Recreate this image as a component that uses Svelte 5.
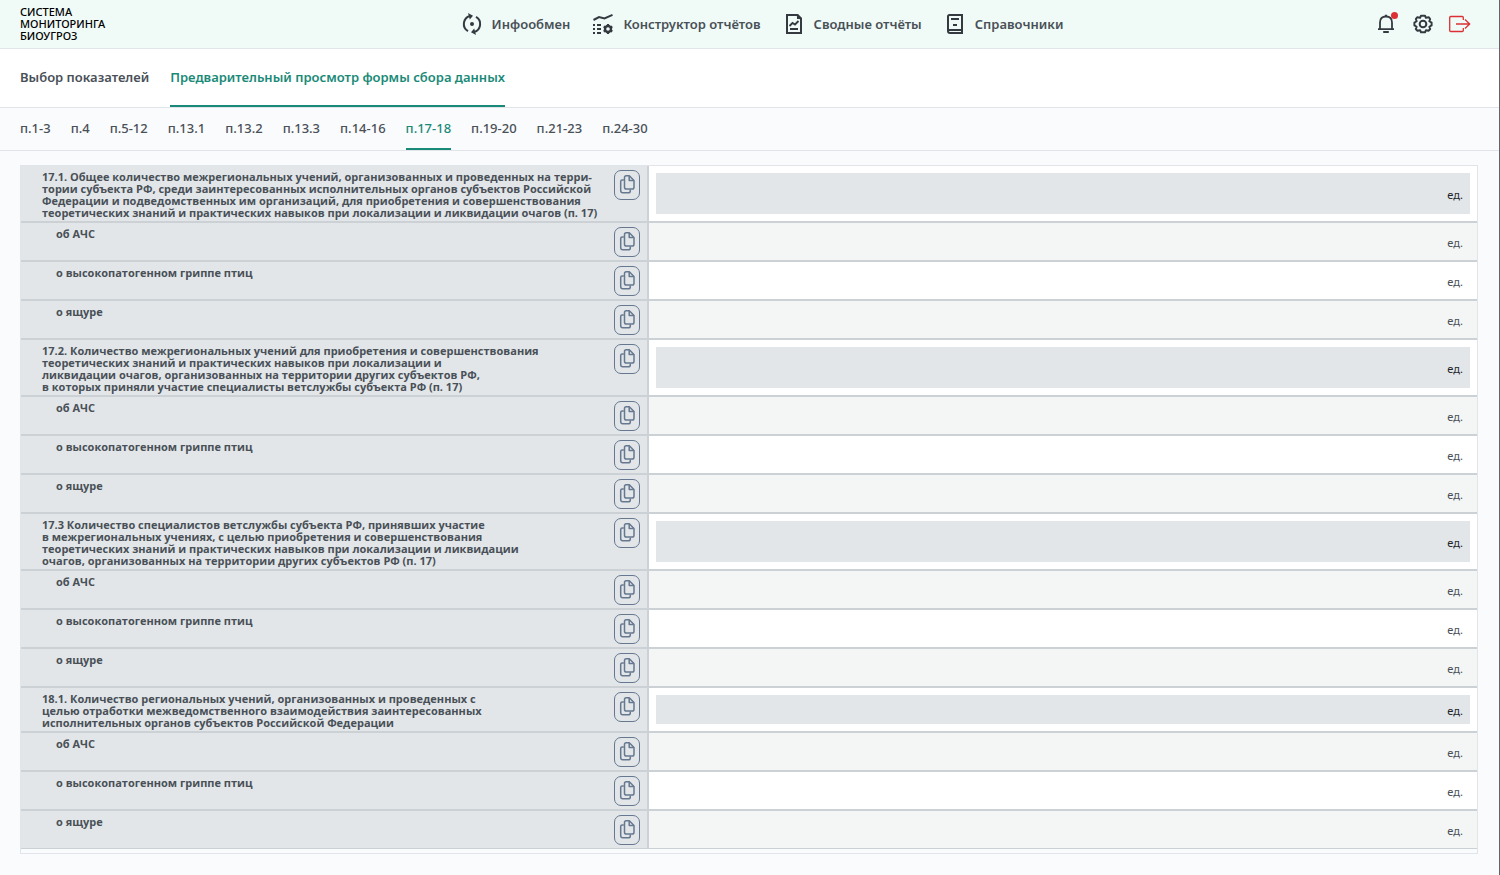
<script>
  const menu = [
    { icon: 'exchange', text: 'Инфообмен' },
    { icon: 'builder', text: 'Конструктор отчётов' },
    { icon: 'report', text: 'Сводные отчёты' },
    { icon: 'book', text: 'Справочники' }
  ];

  const pages = ['Выбор показателей', 'Предварительный просмотр формы сбора данных'];
  const sections = ['п.1-3', 'п.4', 'п.5-12', 'п.13.1', 'п.13.2', 'п.13.3', 'п.14-16', 'п.17-18', 'п.19-20', 'п.21-23', 'п.24-30'];

  let activePage = $state(1);
  let activeSection = $state(7);

  const diseases = ['об АЧС', 'о высокопатогенном гриппе птиц', 'о ящуре'];

  const groups = [
    [
      '17.1. Общее количество межрегиональных учений, организованных и проведенных на терри-',
      'тории субъекта РФ, среди заинтересованных исполнительных органов субъектов Российской',
      'Федерации и подведомственных им организаций, для приобретения и совершенствования',
      'теоретических знаний и практических навыков при локализации и ликвидации очагов (п. 17)'
    ],
    [
      '17.2. Количество межрегиональных учений для приобретения и совершенствования',
      'теоретических знаний и практических навыков при локализации и',
      'ликвидации очагов, организованных на территории других субъектов РФ,',
      'в которых приняли участие специалисты ветслужбы субъекта РФ (п. 17)'
    ],
    [
      '17.3 Количество специалистов ветслужбы субъекта РФ, принявших участие',
      'в межрегиональных учениях, с целью приобретения и совершенствования',
      'теоретических знаний и практических навыков при локализации и ликвидации',
      'очагов, организованных на территории других субъектов РФ (п. 17)'
    ],
    [
      '18.1. Количество региональных учений, организованных и проведенных с',
      'целью отработки межведомственного взаимодействия заинтересованных',
      'исполнительных органов субъектов Российской Федерации'
    ]
  ];

  let values = $state({});
</script>

{#snippet copyButton()}
  <button class="copy" type="button" aria-label="Копировать">
    <svg width="16" height="20" viewBox="0 0 16 20" fill="none" stroke="currentColor" stroke-width="1.5" stroke-linejoin="round">
      <path d="M4.800 5H3.200Q1.700 5 1.700 6.500V15.500Q1.700 17.800 3.700 17.800H9.300Q11.300 17.800 11.300 16V14.500" />
      <path d="M7.200 .8H10.300L15 5.500V12.200Q15 14 13.200 14H7.400Q5.500 14 5.500 12.200V2.600Q5.500 .8 7.200 .8Z" />
      <path d="M10.200 1V5.500H14.800" />
    </svg>
  </button>
{/snippet}

<div class="app">
  <header class="top">
    <a class="logo" href="#home">СИСТЕМА<br />МОНИТОРИНГА<br />БИОУГРОЗ</a>

    <nav class="menu">
      {#each menu as item}
        <a href="#{item.icon}">
          {#if item.icon === 'exchange'}
            <svg height="22" viewBox="0 0 20 22" fill="none" stroke="currentColor" stroke-width="2">
              <path d="M6 18.200A8.300 8.300 0 0 1 8 3M14 3.800A8.300 8.300 0 0 1 12 19" />
              <path d="M6 0L11 2.800L7.800 6.600ZM14 22L9 19.200L12.200 15.400Z" fill="currentColor" stroke="none" />
              <circle cx="10" cy="11" r="2" fill="currentColor" stroke="none" />
            </svg>
          {:else if item.icon === 'builder'}
            <svg height="22" viewBox="0 0 20 22" fill="none" stroke="currentColor" stroke-width="2">
              <path d="M.5 7L6 4L11.500 5.500L19.500 1.800" stroke-width="2" />
              <path d="M0 12H2M4 12H8M0 16H2M4 16H8M0 20H2M4 20H8" />
              <circle cx="15" cy="16" r="3" stroke-width="2.400" />
              <path d="M15 11V13M15 19V21M10.700 13.500L12.400 14.500M17.600 17.500L19.300 18.500M10.700 18.500L12.400 17.500M17.600 14.500L19.300 13.500" stroke-width="2.200" />
            </svg>
          {:else if item.icon === 'report'}
            <svg height="20" viewBox="0 0 16 20" fill="none" stroke="currentColor" stroke-width="2">
              <path d="M1 1H11L15 5V19H1Z" />
              <path d="M11 0V5H16V4L12 0Z" fill="currentColor" stroke="none" />
              <path d="M4 15H12M3.500 12L6.500 9L9 10.500L12.500 7" stroke-width="1.800" />
            </svg>
          {:else}
            <svg height="20" viewBox="0 0 16 20" fill="none" stroke="currentColor" stroke-width="2">
              <path d="M15 16V1H2.500Q1 1 1 2.500V17Q1 19 3 19H16M1 16H16M15 16V19" />
              <path d="M4 5H12M6 11H10" />
            </svg>
          {/if}
          <span>{item.text}</span>
        </a>
      {/each}
    </nav>

    <div class="tools">
      <button class="bell" type="button" aria-label="Уведомления">
        <svg width="22" height="20" viewBox="0 0 22 20" fill="none" stroke="currentColor" stroke-width="1.800">
          <path d="M3 15.200H19M5 15V8.500Q5 2.500 11 2.500Q17 2.500 17 8.500V15M9.800 1.600H12.200" />
          <path d="M8.200 18H13.800" stroke-width="2" />
        </svg>
        <span class="dot"></span>
      </button>
      <button type="button" aria-label="Настройки">
        <svg width="20" height="20" viewBox="0 0 24 24" fill="none" stroke="currentColor" stroke-width="2.400" stroke-linejoin="round">
          <path d="M9.600 2H14.400L15.500 4.600L19 3.900L20.600 6L19.600 8.700L22.300 10.300V13.700L19.600 15.300L20.600 18L18.600 20.200L15.600 19.400L14.400 22H9.600L8.500 19.400L5.400 20.200L3.400 18L4.400 15.300L1.700 13.700V10.300L4.400 8.700L3.400 6L5 3.900L8.500 4.600Z" />
          <circle cx="12" cy="12" r="4" />
        </svg>
      </button>
      <button class="exit" type="button" aria-label="Выход">
        <svg width="22" height="18" viewBox="0 0 22 18" fill="none" stroke="currentColor" stroke-width="1.300">
          <path d="M14.300 5V2.500Q14.300 1.500 13.300 1.500H1.700Q.7 1.500 .7 2.500V15.500Q.7 16.500 1.700 16.500H13.300Q14.300 16.500 14.300 15.500V13" />
          <path d="M7 9H20.500M16 4.500L20.700 9L16 13.500" />
        </svg>
      </button>
    </div>
  </header>

  <nav class="tabs pages">
    {#each pages as page, i}
      <button type="button" class:active={i === activePage} onclick={() => (activePage = i)}>{page}</button>
    {/each}
  </nav>

  <nav class="tabs sections">
    {#each sections as section, i}
      <button type="button" class:active={i === activeSection} onclick={() => (activeSection = i)}>{section}</button>
    {/each}
  </nav>

  <main>
    <div class="frame">
      <table>
        <tbody>
          {#each groups as lines, g}
            <tr class="total">
              <th scope="row">
                <div class="name">
                  <label for="total-{g}">{#each lines as line}{line}<br />{/each}</label>
                  {@render copyButton()}
                </div>
              </th>
              <td>
                <div class="field">
                  <input id="total-{g}" type="text" readonly />
                  <span>ед.</span>
                </div>
              </td>
            </tr>
            {#each diseases as disease, d}
              <tr class="item" class:odd={d % 2 === 0}>
                <th scope="row">
                  <div class="name">
                    <label for="value-{g}-{d}">{disease}</label>
                    {@render copyButton()}
                  </div>
                </th>
                <td>
                  <div class="field">
                    <input id="value-{g}-{d}" type="text" bind:value={values[`${g}-${d}`]} />
                    <span>ед.</span>
                  </div>
                </td>
              </tr>
            {/each}
          {/each}
        </tbody>
      </table>
    </div>
  </main>
</div>

<style>
  :global(body) {
    background: #fafbfd;
  }

  .app {
    min-height: 100vh;
    box-sizing: border-box;
    border-right: 1px solid #60666b;
    background: #fafbfd;
    color: #495057;
    font-family: 'Noto Sans', 'Open Sans', sans-serif;
    font-size: 13px;
    font-weight: 500;
  }

  button {
    padding: 0;
    border: 0;
    background: none;
    color: inherit;
    font: inherit;
    cursor: pointer;
  }

  svg {
    display: block;
    flex: none;
  }

  /* header */
  .top {
    display: grid;
    grid-template-columns: 1fr auto 1fr;
    align-items: center;
    height: 48px;
    padding: 0 28px 0 20px;
    border-bottom: 1px solid #e1e5e9;
    background: #f0fbf8;
  }

  .logo {
    color: #000;
    font-size: 11px;
    font-weight: 500;
    line-height: 12px;
    text-decoration: none;
  }

  .menu {
    display: flex;
    gap: 21px;
    padding-left: 32px;
    font-weight: 600;
  }

  .menu a {
    display: flex;
    align-items: center;
    gap: 8px;
    color: #495057;
    text-decoration: none;
  }

  .menu svg {
    width: 24px;
  }

  .menu svg,
  .tools {
    color: #343a40;
  }

  .tools {
    display: flex;
    align-items: center;
    justify-content: flex-end;
    gap: 16px;
  }

  .bell {
    position: relative;
  }

  .dot {
    position: absolute;
    top: -2px;
    right: -1px;
    width: 7px;
    height: 7px;
    border-radius: 50%;
    background: #dc3035;
  }

  .exit {
    color: #dc3035;
  }

  /* tabs */
  .tabs {
    display: flex;
    gap: 21px;
    padding: 0 20px;
    border-bottom: 1px solid #e1e5e9;
  }

  .tabs button {
    border-bottom: 2px solid transparent;
    white-space: nowrap;
  }

  .tabs .active {
    border-color: #1a8a78;
    color: #1a8a78;
  }

  .pages {
    height: 58px;
    background: #fff;
    font-weight: 600;
  }

  .sections {
    gap: 20px;
    height: 42px;
  }

  /* table */
  main {
    padding: 14px 21px 21px 20px;
  }

  .frame {
    padding-bottom: 4px;
    border: 1px solid #e1e5e9;
  }

  table {
    width: 100%;
    border-collapse: separate;
    border-spacing: 0;
    table-layout: fixed;
    background: #fff;
  }

  th,
  td {
    padding: 0;
    border-bottom: 2px solid #ccd1d6;
    vertical-align: top;
  }

  tr:last-child th,
  tr:last-child td {
    border-bottom-width: 1px;
  }

  th {
    width: 43%;
    border-right: 2px solid #ccd1d6;
    background: #e2e6e9;
    text-align: left;
  }

  .name {
    display: flex;
    align-items: flex-start;
    justify-content: space-between;
    padding: 4px 7px 2px 21px;
  }

  .name label {
    padding-top: 1px;
    font-family: 'Open Sans', 'Noto Sans', sans-serif;
    font-size: 11px;
    font-weight: 700;
    line-height: 12px;
    white-space: nowrap;
  }

  .item .name {
    padding-left: 35px;
  }

  .copy {
    display: flex;
    flex: none;
    align-items: center;
    justify-content: center;
    box-sizing: border-box;
    width: 26px;
    height: 30px;
    border: 1px solid #667890;
    border-radius: 7px;
    color: #667890;
  }

  td {
    background: #fff;
    font-size: 11px;
    font-weight: 400;
  }

  .odd td {
    background: #f4f6f6;
  }

  .field {
    display: flex;
    align-items: center;
    height: 37px;
    padding-right: 14px;
  }

  .field span {
    padding-top: 2px;
  }

  input {
    flex: 1;
    min-width: 0;
    height: 24px;
    padding: 0 8px;
    border: 0;
    outline: 0;
    background: transparent;
    color: inherit;
    font: inherit;
    text-align: right;
  }

  .total td {
    height: 29px;
    padding: 7px;
    background: #e2e6e9 content-box;
    color: #212529;
  }

  .total .field {
    height: 100%;
    padding-right: 7px;
  }
</style>
